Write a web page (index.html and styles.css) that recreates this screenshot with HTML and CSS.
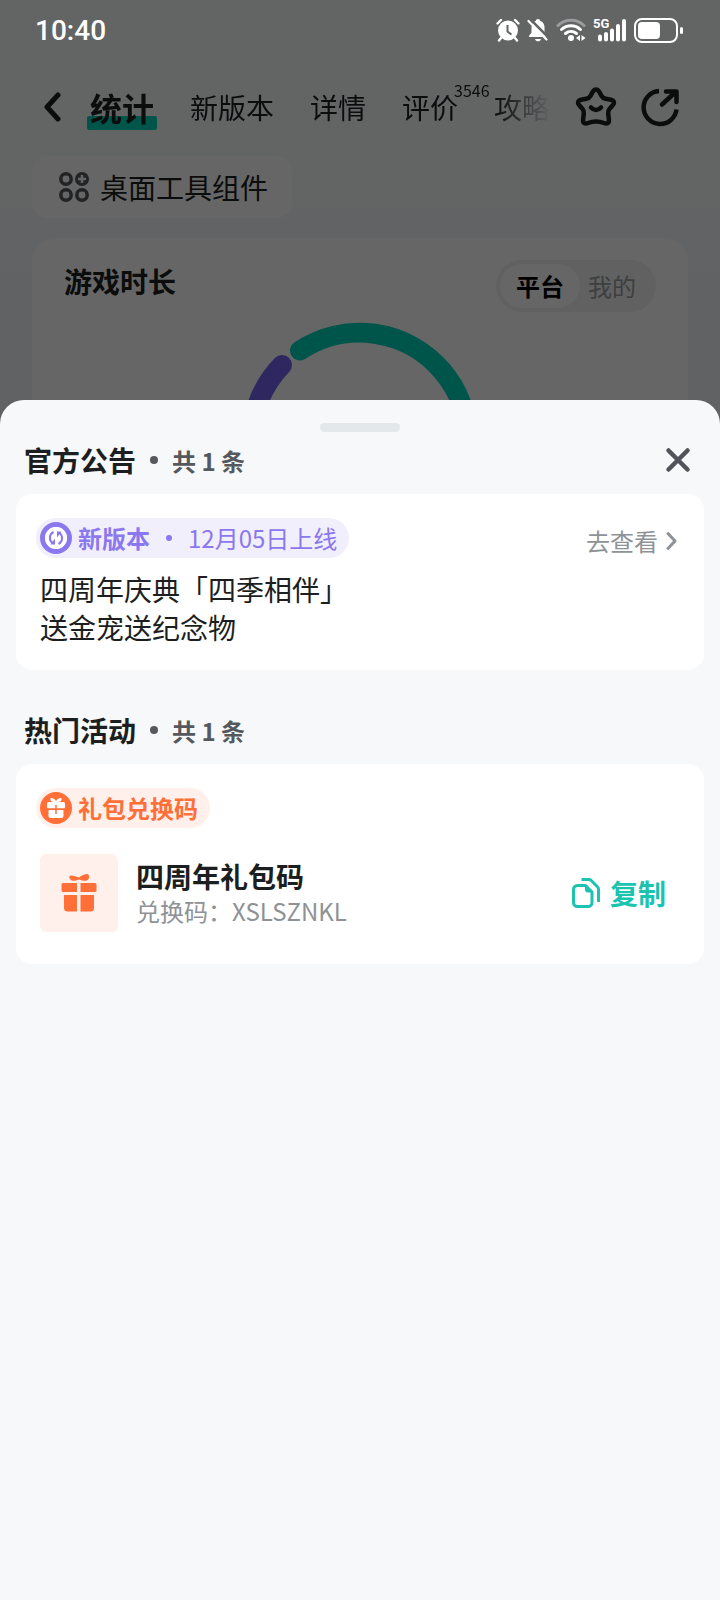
FILE: index.html
```
<!DOCTYPE html>
<html lang="zh-CN">
<head>
    <meta charset="UTF-8">
    <meta name="viewport" content="width=device-width, initial-scale=1.0">
    <title>官方公告</title>
    <link rel="stylesheet" href="styles.css">
</head>
<body>
    <div class="status-bar">
        <span class="clock">10:40</span>
        <div class="status-icons">
            <svg width="24" height="24" viewBox="0 0 24 24">
                <circle cx="12" cy="12.500" r="10" fill="#fff"/>
                <path d="M1.500 5.500L5 2M22.500 5.500L19 2M5 20l-2 2.500M19 20l2 2.500" stroke="#fff" stroke-width="2.400" stroke-linecap="round"/>
                <path d="M11.500 7v6.500l4 3" fill="none" stroke="#636465" stroke-width="2"/>
            </svg>
            <svg width="22" height="24" viewBox="0 0 22 24">
                <path d="M11 1c1.200 0 2 .8 2 1.800 3 1 4.500 3.500 4.500 6.700v5L20 18v1H2v-1l2.500-3.500v-5c0-3.200 1.500-5.700 4.500-6.700C9 1.800 9.800 1 11 1z" fill="#fff"/>
                <path d="M8 21h6c-.5 1.500-1.500 2.300-3 2.300S8.500 22.500 8 21z" fill="#fff"/>
                <path d="M3 1l19 19" stroke="#636465" stroke-width="2.500"/>
                <path d="M1.500 3l18 18.500" stroke="#fff" stroke-width="2.200" stroke-linecap="round"/>
            </svg>
            <svg width="30" height="24" viewBox="0 0 30 24" fill="none" stroke-linecap="round">
                <path d="M2 7.500C9 .5 21 .5 28 7.500" stroke="#9a9b9c" stroke-width="3"/>
                <path d="M5.500 11.500c5.500-5 13.500-5 19 0" stroke="#fff" stroke-width="3"/>
                <path d="M9.500 15.500c3.300-2.700 7.700-2.700 11 0" stroke="#fff" stroke-width="3"/>
                <circle cx="15" cy="20" r="3" fill="#fff"/>
                <path d="M24 17v6l-4-3zM25.500 17v6l4-3z" fill="#fff"/>
            </svg>
            <div class="signal">
                <span>5G</span>
                <svg width="34" height="24" viewBox="0 0 34 24" stroke="#fff" stroke-width="4" stroke-linecap="round">
                    <path d="M7 18.500v3M13 16v5.500M19 12.500v9M25 8v13.500M31 3v18.500"/>
                </svg>
            </div>
            <svg width="49" height="25" viewBox="0 0 49 25">
                <rect x="1" y="1" width="42" height="23" rx="7" fill="none" stroke="#fff" stroke-width="2"/>
                <rect x="4" y="4" width="22" height="17" rx="4" fill="#fff"/>
                <rect x="46" y="9" width="3" height="7" rx="1.500" fill="#fff"/>
            </svg>
        </div>
    </div>

    <main class="page">
        <header class="top-nav">
            <button class="icon-btn" aria-label="返回">
                <svg width="18" height="30" viewBox="0 0 18 30" fill="none" stroke="currentColor" stroke-width="5" stroke-linecap="round" stroke-linejoin="round">
                    <path d="M15 3L4 15l11 12"/>
                </svg>
            </button>
            <nav class="tabs">
                <a class="tab active" href="#"><span>统计</span></a>
                <a class="tab" href="#">新版本</a>
                <a class="tab" href="#">详情</a>
                <a class="tab" href="#">评价<sup class="count">3546</sup></a>
                <a class="tab" href="#">攻略</a>
            </nav>
            <button class="icon-btn" aria-label="收藏">
                <svg width="42" height="42" viewBox="0 0 42 42" fill="none" stroke="currentColor" stroke-width="4.500" stroke-linecap="round" stroke-linejoin="round">
                    <path d="M21 3.500c1.600 0 2.600 1 3.500 2.700l2 3.600c1 1.800 2.300 2.600 4.200 3l5.300 1c3.200.7 3.800 2.900 1.900 5.200l-3.300 3.800c-1.300 1.500-1.600 2.900-1.400 4.800l.7 6c.3 3.700-1.900 4.700-4.900 3.400-5.500-2.200-10.500-2.200-16 0-3 1.300-5.200.3-4.900-3.400l.7-6c.2-1.900-.1-3.300-1.400-4.800L4.100 19c-1.900-2.300-1.300-4.500 1.900-5.200l5.300-1c1.900-.4 3.200-1.200 4.200-3l2-3.600c.9-1.700 1.900-2.700 3.500-2.700z"/>
                    <path d="M16 21.500c3 3.400 7 3.400 10 0"/>
                </svg>
            </button>
            <button class="icon-btn" aria-label="分享">
                <svg width="42" height="42" viewBox="0 0 42 42" fill="none" stroke="currentColor" stroke-width="4.500" stroke-linecap="round" stroke-linejoin="round">
                    <path d="M20 5A16.500 16.500 0 1 0 37.500 23.500" stroke-linecap="butt"/>
                    <path d="M23 18.500L36 6.500M27 5.500h10.500V16"/>
                </svg>
            </button>
        </header>

        <button class="widget-chip">
            <svg width="30" height="30" viewBox="0 0 30 30" fill="none" stroke="currentColor" stroke-width="3.500">
                <circle cx="7" cy="7" r="5.200"/>
                <circle cx="7" cy="23" r="5.200"/>
                <circle cx="23" cy="23" r="5.200"/>
                <circle cx="23" cy="7" r="7" fill="currentColor" stroke="none"/>
                <path d="M23 3v8M19 7h8" stroke="#fff" stroke-width="2.500"/>
            </svg>
            桌面工具组件
        </button>

        <section class="stats-card">
            <div class="stats-head">
                <h2>游戏时长</h2>
                <div class="switch">
                    <button class="switch-item on">平台</button>
                    <button class="switch-item">我的</button>
                </div>
            </div>
            <svg class="ring" width="240" height="240" viewBox="0 0 240 240" fill="none" stroke-width="20" stroke-linecap="round">
                <path d="M60 29.500A108.500 108.500 0 0 1 200 193" stroke="#00d4ba"/>
                <path d="M42 44A108.500 108.500 0 0 0 40 193" stroke="#7563f0"/>
            </svg>
        </section>
    </main>

    <div class="scrim"></div>

    <div class="sheet" role="dialog" aria-label="官方公告">
        <div class="handle"></div>

        <div class="section-head">
            <h2>官方公告</h2>
            <i class="dot"></i>
            <span class="total">共 1 条</span>
            <button class="icon-btn close" aria-label="关闭">
                <svg width="28" height="28" viewBox="0 0 28 28" fill="none" stroke="currentColor" stroke-width="4.500" stroke-linecap="round">
                    <path d="M4.500 4.500l19 19M23.500 4.500l-19 19"/>
                </svg>
            </button>
        </div>
        <article class="card">
            <div class="card-top">
                <div class="tag purple">
                    <svg width="32" height="32" viewBox="0 0 32 32" fill="none" stroke="currentColor">
                        <circle cx="16" cy="16" r="13.500" stroke-width="5"/>
                        <circle cx="16" cy="16" r="11" fill="#fff" stroke="none"/>
                        <path d="M13.500 10a6.500 6.500 0 0 0-1 11M18.500 22a6.500 6.500 0 0 0 1-11" stroke-width="2"/>
                        <path d="M15 16.500V22.500H10.500zM17 15.500V9.500H21.500z" fill="currentColor" stroke="none"/>
                    </svg>
                    <b>新版本</b>
                    <i class="dot small"></i>
                    <span>12月05日上线</span>
                </div>
                <a class="more" href="#">去查看
                    <svg width="12" height="20" viewBox="0 0 12 20" fill="none" stroke="currentColor" stroke-width="3" stroke-linecap="round" stroke-linejoin="round">
                        <path d="M2 2.500l7 7.500-7 7.500"/>
                    </svg>
                </a>
            </div>
            <p class="notice">四周年庆典「四季相伴」<br>送金宠送纪念物</p>
        </article>

        <div class="section-head second">
            <h2>热门活动</h2>
            <i class="dot"></i>
            <span class="total">共 1 条</span>
        </div>
        <article class="card">
            <div class="tag orange">
                <svg width="32" height="32" viewBox="0 0 32 32">
                    <circle cx="16" cy="16" r="16" fill="currentColor"/>
                    <path d="M16 9c-2-3-5-3.500-5.500-2.500S11 10 14 10h4c3 0 4-2.500 3.500-3.500S18 6 16 9z" fill="#fff"/>
                    <rect x="7" y="10" width="18" height="6.500" rx="1.500" fill="#fff"/>
                    <rect x="8.500" y="17" width="15" height="9" rx="2" fill="#fff"/>
                    <path d="M16 13v9M7 17.200h18" stroke="currentColor" stroke-width="1.500"/>
                </svg>
                <b>礼包兑换码</b>
            </div>
            <div class="gift">
                <div class="thumb">
                    <svg width="36" height="38" viewBox="0 0 36 38" fill="currentColor">
                        <path d="M18 3.500C20.500 1.500 24 0 26 0c2.200 0 2.600 3 1.500 5-1 2-4.500 2.500-9.500.500C13 7.500 10.500 7 9 5c-1.500-2-.5-3.500 1.500-3.500S15 2.500 18 3.500z"/>
                        <path d="M2 9h14v9H2a1.500 1.500 0 0 1-1.500-1.500v-6A1.500 1.500 0 0 1 2 9zM19.500 9H34a1.500 1.500 0 0 1 1.500 1.500v6A1.500 1.500 0 0 1 34 18H19.500z"/>
                        <path d="M3 21h13v16.500H6.500A3.500 3.500 0 0 1 3 34zM19.500 21H33v13a3.500 3.500 0 0 1-3.500 3.500h-10z"/>
                    </svg>
                </div>
                <div class="gift-text">
                    <h3>四周年礼包码</h3>
                    <p>兑换码：XSLSZNKL</p>
                </div>
                <button class="copy">
                    <svg width="28" height="30" viewBox="0 0 28 30" fill="none" stroke="currentColor" stroke-width="3" stroke-linejoin="round">
                        <path d="M5.500 7.500h8l6.500 6.500v10.500a4 4 0 0 1-4 4H5.500a4 4 0 0 1-4-4v-13a4 4 0 0 1 4-4z"/>
                        <path d="M13 7.500V11.500a3 3 0 0 0 3 3H20z" fill="currentColor" stroke="none"/>
                        <path d="M9.500 1.500h7.500c1 0 1.500.3 2.200 1l6 6c.8.8 1.300 1.500 1.300 2.500v13"/>
                    </svg>
                    复制
                </button>
            </div>
        </article>
    </div>
</body>
</html>
```
FILE: styles.css
```
* { margin: 0; padding: 0; box-sizing: border-box; }
body { height: 100vh; overflow: hidden; position: relative; background: linear-gradient(#f7f9fb 200px, #f1f4f8 340px); font-family: "Noto Sans CJK SC", sans-serif; color: #1c1e20; }
button { border: none; background: none; font: inherit; color: inherit; cursor: pointer; }
a { color: inherit; text-decoration: none; }
svg { display: block; flex-shrink: 0; }

/* status bar stays above the scrim */
.status-bar { position: relative; z-index: 2; height: 60px; padding: 0 37px 0 35px; display: flex; align-items: center; justify-content: space-between; color: #fff; }
.clock { font-family: Roboto, sans-serif; font-size: 28px; font-weight: 500; }
.status-icons { display: flex; align-items: center; gap: 7px; }
.signal { position: relative; }
.signal span { position: absolute; left: 0; top: 0; font: bold 13px/12px Roboto, sans-serif; }

.top-nav { height: 94px; padding: 0 39px 0 43px; display: flex; align-items: center; }
.icon-btn { display: flex; align-items: center; justify-content: center; }
.tabs { flex: 1; min-width: 0; height: 60px; margin: 0 24px 0 23px; padding-left: 6px; display: flex; align-items: center; gap: 36px; overflow: hidden; -webkit-mask-image: linear-gradient(to right, #000 calc(100% - 56px), transparent); mask-image: linear-gradient(to right, #000 calc(100% - 56px), transparent); }
.tab { position: relative; flex-shrink: 0; font-size: 28px; line-height: 40px; }
.tab.active { font-size: 32px; font-weight: bold; }
.tab.active span { position: relative; }
.tab.active::before { content: ""; position: absolute; left: -3px; right: -3px; bottom: -3px; height: 14px; border-radius: 2px; background: #00d4ba; }
.count { position: absolute; left: 100%; top: -7px; margin-left: -4px; font-size: 16px; line-height: 20px; }
.top-nav > .icon-btn + .icon-btn { margin-left: 22px; }

.widget-chip { height: 62px; margin: 2px 0 0 32px; padding: 0 24px 0 27px; display: flex; align-items: center; gap: 11px; border-radius: 16px; background: #fff; font-size: 28px; }
.widget-chip svg { color: #55585c; }

.stats-card { margin: 20px 32px 0; padding: 22px 32px 32px; border-radius: 24px; background: #fff; }
.stats-head { display: flex; align-items: flex-start; justify-content: space-between; }
.stats-head h2 { font-size: 28px; line-height: 42px; }
.switch { display: flex; padding: 4px; border-radius: 26px; background: #f2f3f4; }
.switch-item { height: 44px; padding: 0 16px; border-radius: 22px; font-size: 24px; line-height: 40px; color: #999da1; }
.switch-item + .switch-item { padding: 0 16px 0 8px; }
.switch-item.on { background: #fff; color: #000; font-weight: bold; }
.ring { margin: 9px auto 0; }

.scrim { position: absolute; inset: 0; z-index: 1; background: rgba(0,0,0,0.6); }

.sheet { position: absolute; left: 0; right: 0; bottom: 0; z-index: 3; height: 75vh; padding: 23px 16px 24px; border-radius: 24px 24px 0 0; background: #f7f8fa; }
.handle { width: 80px; height: 9px; margin: 0 auto; border-radius: 5px; background: #e3e8ea; }
.section-head { height: 44px; margin: 6px 0 12px; padding: 0 12px 0 8px; display: flex; align-items: center; }
.section-head.second { margin-top: 38px; }
.section-head h2 { font-size: 28px; line-height: 40px; }
.dot { width: 8px; height: 8px; margin: 0 14px; border-radius: 50%; background: #55585c; }
.dot.small { width: 6px; height: 6px; margin: 0 16px; background: currentColor; }
.total { font-size: 24px; font-weight: bold; color: #55585c; }
.close { margin-left: auto; color: #505357; }

.card { padding: 24px; border-radius: 16px; background: #fff; }
.card-top { display: flex; align-items: flex-start; justify-content: space-between; }
.tag { width: fit-content; height: 40px; margin-left: -4px; padding: 0 12px 0 4px; display: flex; align-items: center; border-radius: 20px; font-size: 24px; line-height: 40px; }
.tag b { margin-left: 6px; }
.tag.purple { color: #8b78ee; background: #f2effd; }
.tag.orange { color: #ff6f37; background: #fff0eb; }
.more { display: flex; align-items: center; gap: 8px; padding: 3px 2px 0 0; font-size: 24px; line-height: 40px; color: #8e9296; }
.notice { margin-top: 9px; font-size: 28px; line-height: 38px; }

.gift { display: flex; align-items: center; margin: 26px 14px 8px 0; }
.thumb { width: 78px; height: 78px; display: flex; align-items: center; justify-content: center; border-radius: 6px; color: #ff6f37; background: #fff0eb; }
.gift-text { flex: 1; margin-left: 18px; }
.gift-text h3 { font-size: 28px; line-height: 36px; }
.gift-text p { font-size: 24px; line-height: 34px; color: #8e9296; }
.copy { display: flex; align-items: center; gap: 10px; font-size: 28px; font-weight: bold; color: #1bc3b0; }
```
